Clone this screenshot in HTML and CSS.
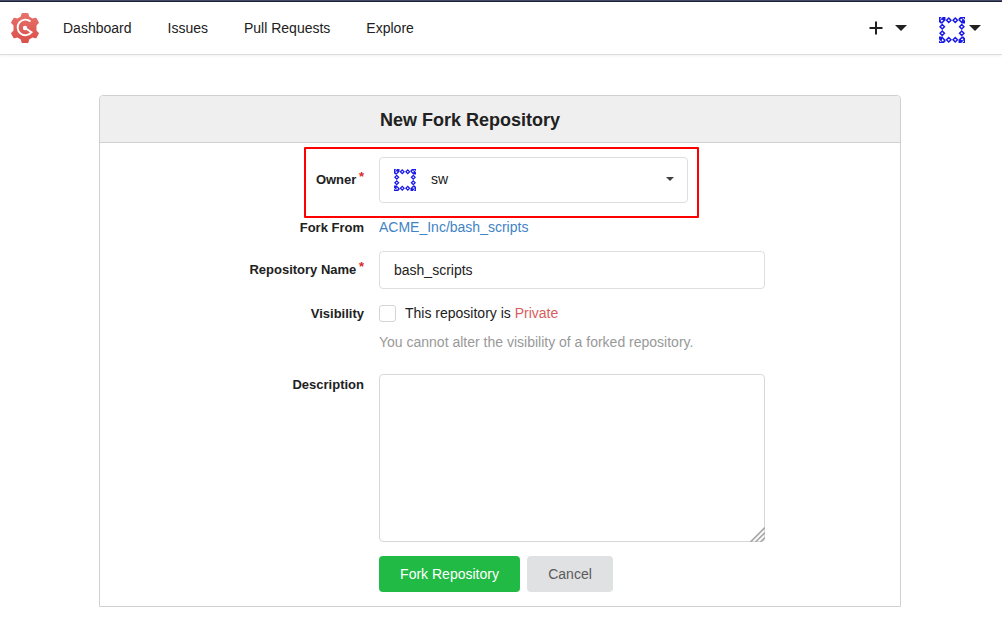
FILE: index.html
```html
<!DOCTYPE html>
<html lang="en">
<head>
<meta charset="utf-8">
<title>New Fork Repository</title>
<link rel="stylesheet" href="styles.css">
</head>
<body>
<svg class="defs" width="0" height="0" aria-hidden="true">
  <symbol id="avatar" viewBox="0 0 48 48">
    <g id="side">
      <path class="avatar-fill" fill-rule="evenodd" d="M0 0H5L2 3V5L7 0H12V6L6 12H3L0 9ZM4 5L3 7L5 9L8 6Z"/>
      <path class="avatar-line" d="M18 2L22 6L18 10L14 6ZM30 2L34 6L30 10L26 6Z"/>
    </g>
    <use href="#side" transform="rotate(90 24 24)"/>
    <use href="#side" transform="rotate(180 24 24)"/>
    <use href="#side" transform="rotate(270 24 24)"/>
  </symbol>
</svg>
<nav class="navbar">
  <svg class="logo" viewBox="0 0 28 30">
    <defs><linearGradient id="gear" x1="0" y1="0" x2="0" y2="1"><stop offset="0" stop-color="#e8716b"/><stop offset="1" stop-color="#d9504a"/></linearGradient></defs>
    <path fill="url(#gear)" d="M10.6 .6Q10.8 0 11.5 0H16.5Q17.200 0 17.400 .6L18.200 3.500L21.500 5.400L24.400 4.700Q25 4.500 25.400 5.100L27.800 9.200Q28.100 9.800 27.600 10.300L25.500 12.500V17.500L27.600 19.700Q28.100 20.200 27.800 20.800L25.400 24.900Q25 25.500 24.400 25.300L21.500 24.600L18.200 26.500L17.400 29.400Q17.200 30 16.500 30H11.500Q10.800 30 10.600 29.400L9.800 26.500L6.500 24.600L3.600 25.300Q3 25.500 2.600 24.900L.2 20.800Q-.1 20.200 .4 19.700L2.500 17.500V12.500L.4 10.300Q-.1 9.800 .2 9.200L2.600 5.100Q3 4.500 3.600 4.700L6.500 5.400L9.800 3.500Z"/>
    <path fill="none" stroke="#fff" stroke-width="1.900" d="M19.500 8.500A7.800 7.800 0 1 0 20.600 19.200L14 15"/>
    <circle cx="14" cy="15" r="2.200" fill="#fff"/>
  </svg>
  <a class="nav-link">Dashboard</a>
  <a class="nav-link">Issues</a>
  <a class="nav-link">Pull Requests</a>
  <a class="nav-link">Explore</a>
  <div class="nav-right">
    <svg class="plus" viewBox="0 0 14 14"><path d="M7 .5V13.500M.5 7H13.500"/></svg>
    <span class="caret"></span>
    <svg class="nav-avatar"><use href="#avatar"/></svg>
    <span class="caret"></span>
  </div>
</nav>
<main class="panel">
  <h1 class="panel-title">New Fork Repository</h1>
  <form class="form">
    <div class="row owner-row">
      <label class="label required">Owner</label>
      <div class="select">
        <svg class="select-avatar"><use href="#avatar"/></svg>
        <span class="select-text">sw</span>
        <svg class="select-caret" viewBox="0 0 8 4"><path d="M0 0H8L4 4Z"/></svg>
      </div>
      <div class="highlight"></div>
    </div>
    <div class="row text-row">
      <label class="label">Fork From</label>
      <a class="link">ACME_Inc/bash_scripts</a>
    </div>
    <div class="row name-row">
      <label class="label required">Repository Name</label>
      <input class="input" type="text" value="bash_scripts">
    </div>
    <div class="row text-row">
      <label class="label">Visibility</label>
      <span class="checkbox"></span>
      <span>This repository is <span class="private">Private</span></span>
    </div>
    <p class="help">You cannot alter the visibility of a forked repository.</p>
    <div class="row text-area-row">
      <label class="label">Description</label>
      <div class="textarea">
        <svg class="grip" viewBox="0 0 15 15"><path d="M.5 15L15 .5M5.500 15L15 5.500M10.500 15L15 10.500"/></svg>
      </div>
    </div>
    <div class="actions">
      <button class="button primary" type="button">Fork Repository</button>
      <button class="button" type="button">Cancel</button>
    </div>
  </form>
</main>
</body>
</html>
```
FILE: styles.css
```css
* { box-sizing: border-box; }
body {
  margin: 0;
  height: 623px;
  overflow: hidden;
  background: #fff;
  color: #212121;
  font: 14px/20px "Liberation Sans", Arial, sans-serif;
}
.defs { position: absolute; }
.avatar-fill { fill: #1a1ae8; }
.avatar-line { fill: none; stroke: #1a1ae8; stroke-width: 2.8; }
.navbar {
  display: flex;
  align-items: center;
  height: 55px;
  padding: 2px 21px 0 11px;
  border-bottom: 1px solid #dcdcdc;
  background: linear-gradient(#434a68 1px, #1c2134 1px, #1c2134 2px, #fff 2px);
  box-shadow: 0 1px 3px rgba(0, 0, 0, .06);
}
.logo { width: 28px; height: 30px; margin-right: 24px; }
.nav-link { margin-right: 36px; }
.nav-right { display: flex; align-items: center; margin-left: auto; }
.plus { width: 14px; height: 14px; margin-right: 12px; fill: none; stroke: #212121; stroke-width: 2; }
.caret {
  border: 6px solid transparent;
  border-top-color: #212121;
  border-bottom: 0;
}
.nav-avatar { width: 26px; height: 26px; margin: 3px 4px 0 32px; }
.panel {
  width: 802px;
  height: 512px;
  margin: 40px 0 0 99px;
  border: 1px solid #d0d0d0;
  border-radius: 4px 4px 0 0;
}
.panel-title {
  height: 47px;
  margin: 0;
  padding: 1px 0 0 280px;
  border-bottom: 1px solid #d0d0d0;
  border-radius: 3px 3px 0 0;
  background: #efefef;
  font-size: 18px;
  line-height: 47px;
}
.form { display: flex; flex-direction: column; gap: 14px; padding-top: 14px; }
.row { display: flex; }
.owner-row { position: relative; align-items: center; }
.label {
  width: 264px;
  margin-right: 15px;
  font-size: 13px;
  font-weight: bold;
  line-height: 20px;
  text-align: right;
}
.name-row .label { padding-top: 9px; }
.text-row .label,
.text-area-row .label { padding-top: 1px; }
.required::after {
  content: "*";
  margin-left: 2.6px;
  color: #db2828;
  line-height: 0;
  vertical-align: 3px;
}
.select {
  display: flex;
  align-items: center;
  width: 309px;
  height: 46px;
  padding: 0 14px;
  border: 1px solid #dededf;
  border-radius: 4px;
}
.select-avatar { width: 22px; height: 22px; margin-right: 15px; }
.select-text { padding-bottom: 2px; }
.select-caret { width: 8px; height: 4px; margin: 0 -.5px 2px auto; fill: #404040; }
.highlight {
  position: absolute;
  top: -10px;
  left: 204px;
  width: 395px;
  height: 71px;
  border: 2px solid #f00;
  border-radius: 1px;
}
.text-row { height: 20px; }
.link { color: #4183c4; }
.input {
  width: 386px;
  height: 38px;
  padding: 0 14px;
  border: 1px solid #dededf;
  border-radius: 4px;
  background: #fff;
  color: inherit;
  font: inherit;
}
.checkbox {
  width: 17px;
  height: 17px;
  margin: 2px 9px 0 0;
  border: 1px solid #d4d4d5;
  border-radius: 3px;
}
.private { color: #d95c5c; }
.help { margin: -5px 0 8px 279px; color: #999; }
.textarea {
  display: flex;
  align-items: flex-end;
  justify-content: flex-end;
  width: 386px;
  height: 168px;
  border: 1px solid #d8d8d8;
  border-radius: 4px;
}
.grip { width: 15px; height: 15px; margin: 0 -1px -1px 0; fill: none; stroke: #aaa; stroke-width: 1.7; }
.actions { display: flex; gap: 7px; padding-left: 279px; }
.button {
  width: 86px;
  height: 36px;
  padding: 0;
  border: 0;
  border-radius: 4px;
  background: #e0e1e2;
  color: #5a5a5a;
  font: inherit;
}
.primary { width: 141px; background: #21ba45; color: #fff; }
```
